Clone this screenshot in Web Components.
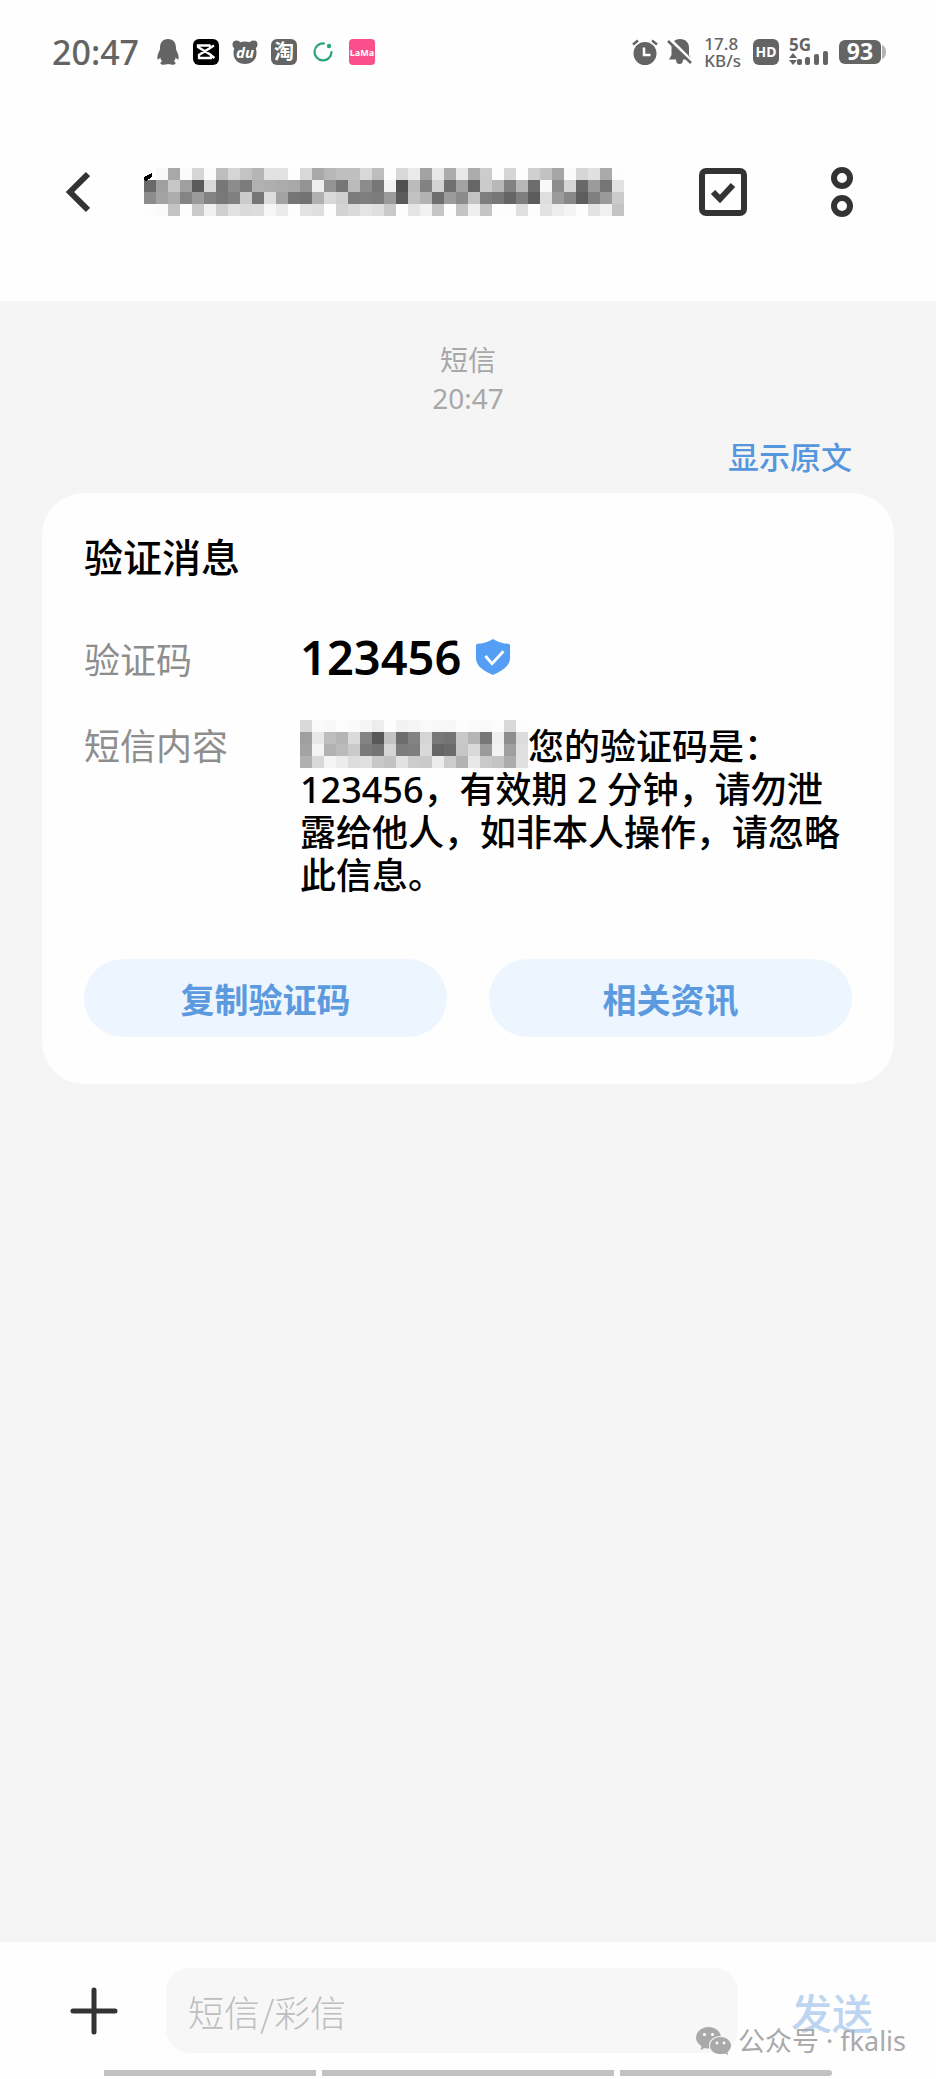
<!DOCTYPE html>
<html lang="zh-CN">
<head>
<meta charset="utf-8">
<meta name="viewport" content="width=device-width, initial-scale=1">
<title>短信</title>
<style>
  body {
    margin: 0;
    background: #f5f5f5;
    font-family: "Noto Sans", "Noto Sans CJK SC", sans-serif;
    color: #000;
  }
</style>
</head>
<body>
<sms-page>
  <status-bar slot="top" time="20:47"></status-bar>
  <chat-header slot="top">
    <pixel-mosaic slot="title" start-cut rows="
      fdf8a8fbd5fbbdd5c3b5e1e1fdd8a9b7bfbfd8bdfdd8eaa3e8ace8acccfdd5fdd0c2a5fad6e0aafd
      6a9fc69f5bd8778c7bb1aeaba893ee9376bb8c77f250bb82d370a366cbb882b86df88dd5689b75e2
      8ca3ad849b837880cb76dda27572b0d9cf7b7e7b9b5bc2b26d9b8bc37e77657e5cde9b885d809acb
      fdfac3fdc9f0d0e2dadcf6eafde3dffdd3dae4dfc9fde4f2c5fdc4efc5fdfce0fde2edf4fde3f0c3"></pixel-mosaic>
  </chat-header>

  <message-meta time="20:47">短信</message-meta>
  <code-card heading="验证消息">
    <info-row label="验证码"><code-value>123456</code-value></info-row>
    <info-row label="短信内容"><pixel-mosaic rows="
      d9faf8fdfaf5edfdf2f5f9f8f7fdfbf9fcd9fd
      9fe8bdb5da8358c26d83d57874c8b577ef8edc
      a3f3b1baca7a73d57d7fd9666bc6d99bf29fe0
      b0d8f5ecdde0c8c2e2cccaecccb3e8c9c4ace0"></pixel-mosaic>您的验证码是：123456，有效期 2 分钟，请勿泄露给他人，如非本人操作，请忽略此信息。</info-row>
    <pill-button slot="actions">复制验证码</pill-button>
    <pill-button slot="actions">相关资讯</pill-button>
  </code-card>

  <message-composer slot="bottom" hint="短信/彩信">发送</message-composer>
  <gesture-bar slot="bottom"></gesture-bar>
  <account-mark slot="bottom">公众号 · fkalis</account-mark>
</sms-page>

<script>
class SmsPage extends HTMLElement {
  constructor() {
    super();
    this.attachShadow({ mode: "open" }).innerHTML = `
      <style>
        :host {
          display: flex;
          flex-direction: column;
          min-height: 100vh;
        }
        header, footer { background: #fefefe; }
        footer { position: relative; }
        main { flex: 1; padding: 40px 42px; }
      </style>
      <header><slot name="top"></slot></header>
      <main><slot></slot></main>
      <footer><slot name="bottom"></slot></footer>
    `;
  }
}

class StatusBar extends HTMLElement {
  connectedCallback() {
    this.attachShadow({ mode: "open" }).innerHTML = `
      <style>
        :host {
          display: flex;
          align-items: center;
          justify-content: space-between;
          height: 104px;
          padding: 0 50px 0 52px;
          color: #646464;
          font-weight: 500;
        }
        .group { display: flex; align-items: center; gap: 13px; }
        .right { gap: 10px; }
        .time { font-size: 34px; line-height: 40px; margin-right: 4px; }
        .speed { font-size: 17px; line-height: 17px; margin: 0 2px; }
        .speed span { display: block; }
        svg { display: block; fill: #646464; overflow: visible; }
        text { font-weight: 700; }
      </style>
      <div class="group">
        <span class="time">${this.getAttribute("time")}</span>
        <svg width="24" height="26" viewBox="0 0 24 26">
          <path d="M12 0c5.500 0 8.200 4 8 9.500 0 1.500.8 2.500 1.600 4.500 1 2.500 1.300 5 .8 6.200-.5.800-1.800-.2-2.600-1.600-.3 1.500-.9 2.700-1.900 3.700 1.400.8 2 1.700 1.500 2.500-.8 1.300-5.200 1.100-7.400.3-2.200.8-6.600 1-7.400-.3-.5-.8.1-1.700 1.500-2.500-1-1-1.600-2.200-1.900-3.700-.8 1.400-2.100 2.400-2.600 1.600-.5-1.200-.2-3.700.8-6.200.8-2 1.600-3 1.600-4.500C3.800 4 6.500 0 12 0z"/>
        </svg>
        <svg width="26" height="26" viewBox="0 0 26 26">
          <rect width="26" height="26" rx="6" fill="#000"/>
          <path d="M21 6.500 6 16v3h12v-3L5 8V6.500h12.500M17 6.500v2.500M17 15.500l4.500 3.500" fill="none" stroke="#fff" stroke-width="2.300"/>
        </svg>
        <svg width="26" height="26" viewBox="0 0 26 26">
          <circle cx="4.500" cy="5.500" r="4"/><circle cx="21.500" cy="5.500" r="4"/>
          <path d="M13 2.500c8 0 11.500 5 11.500 11.500S20 25 13 25 1.500 20.500 1.500 14 5 2.500 13 2.500z"/>
          <text x="13" y="19" text-anchor="middle" font-size="15" font-style="italic" fill="#fff">du</text>
        </svg>
        <svg width="26" height="26" viewBox="0 0 26 26">
          <rect width="26" height="26" rx="6"/>
          <text x="13" y="20" text-anchor="middle" font-size="20" fill="#fff">淘</text>
        </svg>
        <svg width="26" height="26" viewBox="0 0 26 26">
          <path d="M14 4.500A8.500 8.500 0 1 0 21.500 13" fill="none" stroke="#27a57c" stroke-width="2.200" stroke-linecap="round"/>
          <circle cx="19" cy="7" r="2.200" fill="#27a57c"/>
        </svg>
        <svg width="26" height="26" viewBox="0 0 26 26">
          <rect width="26" height="26" rx="4" fill="#fb4f8c"/>
          <text x="13" y="17" text-anchor="middle" font-size="9" fill="#fff">LaMa</text>
        </svg>
      </div>
      <div class="group right">
        <svg width="26" height="26" viewBox="0 0 26 26">
          <circle cx="13" cy="14.500" r="11.500"/>
          <path d="M1 5.500 6 1.500M20 1.500l5 4" fill="none" stroke="#646464" stroke-width="2.500"/>
          <path d="M12 8.500V16h6.500" fill="none" stroke="#fff" stroke-width="2.500"/>
        </svg>
        <svg width="24" height="26" viewBox="0 0 24 26">
          <path d="M12 0c6 0 9 4 9 9v7l2.500 4.500H15a3.500 4.500 0 0 1-7 0H1L3.500 16V9C3.500 4 6 0 12 0z"/>
          <path d="M1.500.5 24 23" stroke="#fefefe" stroke-width="4"/>
          <path d="M0 2l23 22" stroke="#646464" stroke-width="2.500"/>
        </svg>
        <span class="speed"><span>17.8</span><span>KB/s</span></span>
        <svg width="26" height="26" viewBox="0 0 26 26">
          <rect width="26" height="26" rx="6"/>
          <text x="13" y="18" text-anchor="middle" font-size="14" fill="#fff">HD</text>
        </svg>
        <svg width="40" height="28" viewBox="0 0 40 28">
          <text x="0" y="13" font-size="17">5G</text>
          <path d="M0 20h8l-4-5zM0 22h8l-4 5z"/>
          <rect x="8" y="21" width="5" height="6" rx="2"/>
          <rect x="16" y="19" width="5" height="8" rx="2"/>
          <rect x="25" y="16" width="5" height="11" rx="2"/>
          <rect x="34" y="13" width="5" height="14" rx="2"/>
        </svg>
        <svg width="47" height="24" viewBox="0 0 47 24">
          <rect width="42" height="24" rx="6"/>
          <path d="M43 5c3 1 4 4 4 7s-1 6-4 7z" fill="#b4b4b4"/>
          <text x="21" y="20" text-anchor="middle" font-size="23" fill="#fff">93</text>
        </svg>
      </div>
    `;
  }
}

class ChatHeader extends HTMLElement {
  constructor() {
    super();
    this.attachShadow({ mode: "open" }).innerHTML = `
      <style>
        :host {
          display: flex;
          align-items: center;
          height: 176px;
          padding: 0 83px 21px 66px;
        }
        button { padding: 0; border: 0; background: none; cursor: pointer; }
        svg { display: block; fill: none; stroke: #333; }
        .title { flex: 1; margin-left: 54px; }
        .more { margin-left: 84px; }
      </style>
      <button aria-label="返回">
        <svg width="24" height="42" viewBox="0 0 24 42" stroke-width="6"><path d="M22 3 4 21l18 18"/></svg>
      </button>
      <div class="title"><slot name="title"></slot></div>
      <button aria-label="选择">
        <svg width="48" height="48" viewBox="0 0 48 48" stroke-width="6">
          <rect x="3" y="3" width="42" height="42" rx="4"/>
          <path d="m14 24 7 7 13-14"/>
        </svg>
      </button>
      <button class="more" aria-label="更多">
        <svg width="22" height="50" viewBox="0 0 22 50" stroke-width="6">
          <circle cx="11" cy="11" r="8"/><circle cx="11" cy="39" r="8"/>
        </svg>
      </button>
    `;
  }
}

// Hidden text as grey cells, two hex digits for each cell
class PixelMosaic extends HTMLElement {
  connectedCallback() {
    const cell = 12;
    const rows = this.getAttribute("rows").trim().split(/\s+/);
    const width = (rows[0].length / 2) * cell;
    const cut = this.hasAttribute("start-cut");
    const rects = rows
      .map((row, y) =>
        row
          .match(/../g)
          .map((g, x) => `<rect x="${x * cell}" y="${y * cell}" width="${cell}" height="${cell}" fill="#${g + g + g}"/>`)
          .join("")
      )
      .join("");
    this.attachShadow({ mode: "open" }).innerHTML = `
      <style>
        :host {
          display: inline-block;
          vertical-align: top;
          margin: -5px 0;
        }
        svg { display: block; max-width: 100%; }
      </style>
      <svg width="${width}" height="${rows.length * cell}" viewBox="0 0 ${width} ${rows.length * cell}" shape-rendering="crispEdges" aria-hidden="true">
        ${rects}
        ${cut ? '<path d="M0 12V9l8-4v4L2 13z"/>' : ""}
      </svg>
    `;
  }
}

class MessageMeta extends HTMLElement {
  connectedCallback() {
    this.attachShadow({ mode: "open" }).innerHTML = `
      <style>
        :host {
          display: flex;
          flex-direction: column;
          align-items: center;
          font-size: 28px;
          line-height: 38px;
          color: #a8a8a8;
        }
        a {
          align-self: flex-end;
          margin: 19px 42px 15px;
          font-size: 31px;
          line-height: 42px;
          font-weight: 500;
          color: #5596dd;
          text-decoration: none;
        }
      </style>
      <slot></slot>
      <time>${this.getAttribute("time")}</time>
      <a href="#">显示原文</a>
    `;
  }
}

class CodeCard extends HTMLElement {
  connectedCallback() {
    this.attachShadow({ mode: "open" }).innerHTML = `
      <style>
        :host {
          display: block;
          padding: 42px 42px 47px;
          border-radius: 42px;
          background: #fefefe;
        }
        h2 {
          margin: 0 0 61px;
          font-size: 39px;
          line-height: 43px;
          font-weight: 500;
        }
        .rows { display: grid; gap: 43px; }
        .actions {
          display: grid;
          grid-template-columns: 1fr 1fr;
          gap: 42px;
          margin-top: 62px;
        }
      </style>
      <h2>${this.getAttribute("heading")}</h2>
      <div class="rows"><slot></slot></div>
      <div class="actions"><slot name="actions"></slot></div>
    `;
  }
}

class InfoRow extends HTMLElement {
  connectedCallback() {
    this.attachShadow({ mode: "open" }).innerHTML = `
      <style>
        :host {
          display: grid;
          grid-template-columns: 216px 1fr;
          font-size: 36px;
          line-height: 43px;
        }
        .label { color: #8e8e8e; }
        .value { font-weight: 500; }
      </style>
      <span class="label">${this.getAttribute("label")}</span>
      <div class="value"><slot></slot></div>
    `;
  }
}

class CodeValue extends HTMLElement {
  constructor() {
    super();
    this.attachShadow({ mode: "open" }).innerHTML = `
      <style>
        :host {
          display: flex;
          align-items: center;
          gap: 14px;
          font-size: 47px;
          line-height: 36px;
          font-weight: 600;
        }
        svg { display: block; }
      </style>
      <slot></slot>
      <svg width="36" height="36" viewBox="0 0 36 38" aria-hidden="true">
        <path d="M18 0c5 3 11 5 16 5q2 0 2 2v13c0 9-9 14-18 18C9 34 0 29 0 20V7q0-2 2-2c5 0 11-2 16-5z" fill="#549ff5"/>
        <path d="m10 18 7 8 12-13" fill="none" stroke="#fff" stroke-width="3"/>
      </svg>
    `;
  }
}

class PillButton extends HTMLElement {
  constructor() {
    super();
    this.attachShadow({ mode: "open" }).innerHTML = `
      <style>
        :host { display: block; }
        button {
          width: 100%;
          height: 78px;
          border: 0;
          border-radius: 39px;
          background: #edf5ff;
          color: #5b9ade;
          font: 700 34px/43px "Noto Sans CJK SC", sans-serif;
          cursor: pointer;
        }
      </style>
      <button><slot></slot></button>
    `;
  }
}

class MessageComposer extends HTMLElement {
  connectedCallback() {
    const hint = this.getAttribute("hint");
    this.attachShadow({ mode: "open" }).innerHTML = `
      <style>
        :host {
          display: flex;
          align-items: center;
          padding: 26px 63px 17px 70px;
        }
        button {
          padding: 0;
          border: 0;
          background: none;
          color: #bdd5f0;
          font: 500 41px/48px "Noto Sans CJK SC", sans-serif;
          cursor: pointer;
        }
        svg { display: block; }
        input {
          flex: 1;
          min-width: 0;
          box-sizing: border-box;
          height: 85px;
          margin: 0 53px 0 48px;
          padding: 0 22px;
          border: 0;
          border-radius: 24px;
          background: #f7f7f7;
          font: 300 36px/43px "Noto Sans CJK SC", sans-serif;
        }
        input::placeholder { color: #bebebe; opacity: 1; }
      </style>
      <button aria-label="添加">
        <svg width="48" height="48" viewBox="0 0 48 48"><path d="M24 3v42M3 24h42" stroke="#333" stroke-width="5" stroke-linecap="round"/></svg>
      </button>
      <input type="text" aria-label="${hint}" placeholder="${hint}">
      <button><slot></slot></button>
    `;
  }
}

class GestureBar extends HTMLElement {
  constructor() {
    super();
    this.attachShadow({ mode: "open" }).innerHTML = `
      <style>
        :host {
          display: grid;
          grid-template-columns: 212fr 293fr 212fr;
          gap: 6px;
          padding: 0 104px 3px;
        }
        span { height: 6px; background: #c2c2c2; }
        span:first-child { border-radius: 3px 0 0 3px; }
        span:last-child { border-radius: 0 3px 3px 0; }
      </style>
      <span></span><span></span><span></span>
    `;
  }
}

// Floats over the composer, at the end of the page
class AccountMark extends HTMLElement {
  constructor() {
    super();
    this.attachShadow({ mode: "open" }).innerHTML = `
      <style>
        :host {
          position: absolute;
          right: 30px;
          bottom: 21px;
          display: flex;
          align-items: center;
          gap: 7px;
          font-size: 27px;
          line-height: 34px;
          color: #a9a9a9;
          pointer-events: none;
        }
        svg { display: block; }
      </style>
      <svg width="35" height="28" viewBox="0 0 35 28" aria-hidden="true">
        <path d="M12.500 0C19 0 24 4 24.800 9 18 9 13 13 13 18.500c0 1 .2 2 .5 3-1.800.2-3.500 0-5-.5L4.500 23l1-3.800C2 17 0 14 0 10.800 0 5 5.500 0 12.500 0z" fill="#a9a9a9"/>
        <path d="M24.500 10C30.500 10 35 14 35 18.800c0 2.600-1.400 4.800-3.500 6.400l.6 2.800-3.300-1.600c-1.300.4-2.800.6-4.300.6C18.500 27 14 23.500 14 18.700 14 14 18.500 10 24.500 10z" fill="#a9a9a9"/>
        <g fill="#fefefe"><circle cx="8.500" cy="7.500" r="1.600"/><circle cx="16.500" cy="7.500" r="1.600"/><circle cx="21" cy="16" r="1.400"/><circle cx="28" cy="16" r="1.400"/></g>
      </svg>
      <span><slot></slot></span>
    `;
  }
}

customElements.define("sms-page", SmsPage);
customElements.define("status-bar", StatusBar);
customElements.define("chat-header", ChatHeader);
customElements.define("pixel-mosaic", PixelMosaic);
customElements.define("message-meta", MessageMeta);
customElements.define("code-card", CodeCard);
customElements.define("info-row", InfoRow);
customElements.define("code-value", CodeValue);
customElements.define("pill-button", PillButton);
customElements.define("message-composer", MessageComposer);
customElements.define("gesture-bar", GestureBar);
customElements.define("account-mark", AccountMark);
</script>
</body>
</html>
